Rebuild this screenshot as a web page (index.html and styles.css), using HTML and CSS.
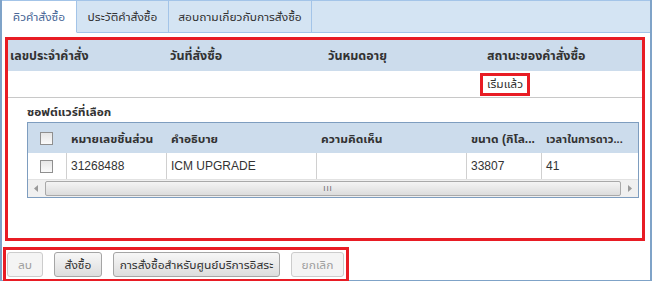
FILE: index.html
```html
<!DOCTYPE html>
<html lang="th">
<head>
<meta charset="utf-8">
<link rel="stylesheet" href="styles.css">
</head>
<body>
<div class="window">
  <div class="tabs">
    <div class="tab active">คิวคำสั่งซื้อ</div>
    <div class="tab t2">ประวัติคำสั่งซื้อ</div>
    <div class="tab t3">สอบถามเกี่ยวกับการสั่งซื้อ</div>
    <div class="tab-fill"></div>
  </div>
  <div class="panel">
    <div class="hl orders">
      <div class="ohead">
        <div class="oc c1">เลขประจำคำสั่ง</div>
        <div class="oc c2">วันที่สั่งซื้อ</div>
        <div class="oc c3">วันหมดอายุ</div>
        <div class="oc c4">สถานะของคำสั่งซื้อ</div>
      </div>
      <div class="orow">
        <div class="oc c1"></div>
        <div class="oc c2"></div>
        <div class="oc c3"></div>
        <div class="oc c4"><span class="status">เริ่มแล้ว</span></div>
      </div>
      <div class="sec-title">ซอฟต์แวร์ที่เลือก</div>
      <div class="grid">
        <div class="grow ghead">
          <div class="gc g0"><span class="cb"></span></div>
          <div class="gc g1">หมายเลขชิ้นส่วน</div>
          <div class="gc g2">คำอธิบาย</div>
          <div class="gc g3">ความคิดเห็น</div>
          <div class="gc g4">ขนาด (กิโล...</div>
          <div class="gc g5">เวลาในการดาว...</div>
        </div>
        <div class="grow gdata">
          <div class="gc g0"><span class="cb"></span></div>
          <div class="gc g1">31268488</div>
          <div class="gc g2">ICM UPGRADE</div>
          <div class="gc g3"></div>
          <div class="gc g4">33807</div>
          <div class="gc g5">41</div>
        </div>
        <div class="hscroll">
          <div class="arrow left"><svg width="5" height="7" viewBox="0 0 5 7"><path d="M4 0 L0 3.5 L4 7 Z" fill="#9a9a9a"/></svg></div>
          <div class="thumb"><span class="grip">III</span></div>
          <div class="arrow right"><svg width="5" height="7" viewBox="0 0 5 7"><path d="M1 0 L5 3.5 L1 7 Z" fill="#9a9a9a"/></svg></div>
        </div>
      </div>
    </div>
    <div class="hl actions">
      <button class="btn dis b1">ลบ</button>
      <button class="btn b2">สั่งซื้อ</button>
      <button class="btn b3">การสั่งซื้อสำหรับศูนย์บริการอิสระ</button>
      <button class="btn dis b4">ยกเลิก</button>
    </div>
  </div>
</div>
</body>
</html>
```

FILE: styles.css
```css
html, body {
  margin: 0;
  padding: 0;
  background: #ffffff;
}
body {
  font-family: "Liberation Sans", "Noto Sans Thai UI", sans-serif;
  font-size: 12px;
  color: #333333;
}
.window {
  width: 648px;
  height: 280px;
  border-left: 2px solid #7fa3c8;
  border-right: 2px solid #7fa3c8;
  border-bottom: 1px solid #7fa3c8;
}
.tabs {
  display: flex;
  height: 32px;
  background: #d4e4f3;
  border-top: 1px solid #a3c4e8;
}
.tab {
  display: flex;
  align-items: center;
  justify-content: center;
  height: 31px;
  border-right: 1px solid #a3c4e8;
  border-bottom: 1px solid #a3c4e8;
  color: #333333;
  font-size: 12px;
  white-space: nowrap;
}
.tab.active {
  background: #ffffff;
  color: #4a6898;
  border-bottom-color: #ffffff;
  width: 74px;
}
.tab.t2 { width: 91px; }
.tab.t3 { width: 142px; }
.tab-fill {
  flex: 1;
  border-bottom: 1px solid #a3c4e8;
}
.panel {
  padding: 4px 0 0 3px;
}
.hl {
  border: 3px solid #e81c24;
  box-sizing: border-box;
}
.orders {
  width: 640px;
  height: 204px;
}
.ohead, .orow {
  display: flex;
}
.ohead {
  height: 31px;
  background: #ccdcec;
  align-items: center;
  font-weight: bold;
  font-size: 12.5px;
}
.orow {
  height: 26px;
  border-bottom: 1px solid #c8c8c8;
  align-items: center;
}
.oc { flex: none; white-space: nowrap; }
.c1 { width: 162px; padding-left: 2px; box-sizing: border-box; }
.c2 { width: 158px; }
.c3 { width: 159px; }
.c4 { flex: 1; }
.status {
  display: inline-block;
  border: 3px solid #e81c24;
  height: 17px;
  line-height: 17px;
  padding: 0 4px;
  margin-left: -7px;
  margin-top: 1px;
}
.sec-title {
  font-weight: bold;
  margin: 6px 0 0 19px;
  height: 18px;
  line-height: 16px;
}
.grid {
  margin-left: 19px;
  width: 610px;
  border: 1px solid #7e9dbf;
}
.grow {
  display: flex;
}
.ghead {
  height: 30px;
  background: #ccdcec;
  font-weight: bold;
}
.gdata {
  height: 26px;
}
.gc {
  flex: none;
  display: flex;
  align-items: center;
  padding-left: 4px;
  box-sizing: border-box;
  white-space: nowrap;
  overflow: hidden;
}
.gdata .gc {
  border-right: 1px solid #d0d0d0;
}
.gdata .gc.g5 { border-right: none; }
.g0 { width: 39px; padding-left: 12px; }
.g1 { width: 100px; }
.g2 { width: 150px; }
.g3 { width: 150px; }
.g4 { width: 75px; }
.g5 { width: 96px; }
.ghead .g5 { font-size: 11px; letter-spacing: 0.1px; }
.cb {
  display: inline-block;
  width: 11px;
  height: 11px;
  border: 1px solid #8f8f8f;
  background: linear-gradient(#e6e6e6, #fafafa);
}
.hscroll {
  display: flex;
  height: 17px;
  background: #f0f0f0;
  border-top: 1px solid #e2e2e2;
}
.arrow {
  width: 17px;
  display: flex;
  align-items: center;
  justify-content: center;
}
.thumb {
  flex: 1;
  margin: 1px 0;
  border: 1px solid #a9a9a9;
  border-radius: 2px;
  background: linear-gradient(#f4f4f4, #dcdcdc);
  display: flex;
  align-items: center;
  justify-content: center;
}
.grip {
  font-size: 8px;
  color: #6a6a6a;
  letter-spacing: 1px;
  margin-left: -10px;
}
.actions {
  margin-top: 6px;
  margin-left: -2px;
  width: 346px;
  height: 35px;
  display: flex;
  align-items: center;
  padding-left: 1px;
  gap: 11px;
}
.btn {
  height: 25px;
  font-family: "Liberation Sans", "Noto Sans Thai UI", sans-serif;
  font-size: 12px;
  color: #333333;
  border: 1px solid #a5a5a5;
  border-radius: 3px;
  background: linear-gradient(#f7f7f7, #dddddd);
  padding: 0;
  white-space: nowrap;
}
.btn.dis {
  color: #a0a0a0;
  border-color: #cccccc;
  background: #f4f4f4;
}
.b1 { width: 36px; }
.b2 { width: 48px; }
.b3 { width: 167px; }
.b4 { width: 53px; }
```
